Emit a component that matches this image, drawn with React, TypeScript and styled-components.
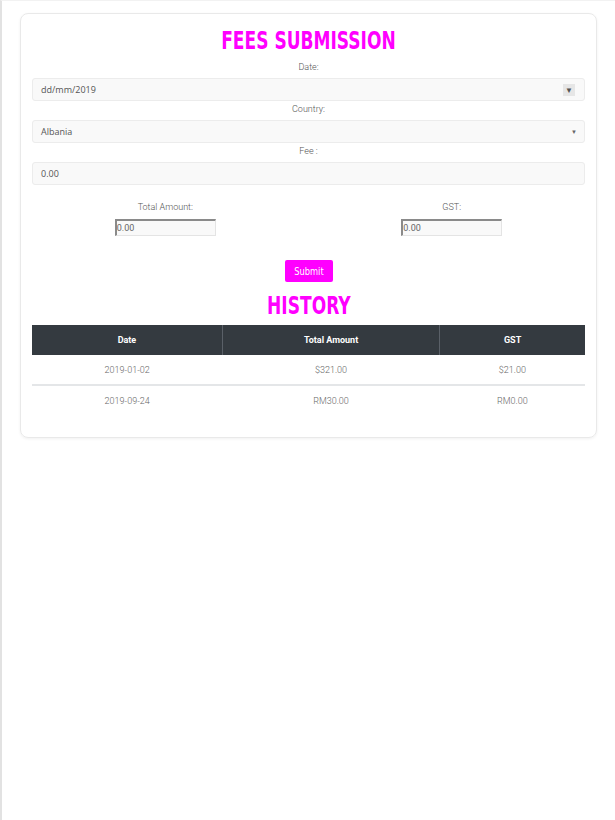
import React from "react";
import styled, { createGlobalStyle } from "styled-components";

const Global = createGlobalStyle`
  html, body { margin: 0; padding: 0; background: #fff; }
  body { font-family: Roboto, "Liberation Sans", sans-serif; }
  * { box-sizing: border-box; }
`;

const Page = styled.div`
  min-height: 820px;
  border-left: 2px solid #e2e2e2;
  border-top: 1px solid #f2f2f2;
  padding: 12px 18px 0 18px;
`;

const Card = styled.div`
  border: 1px solid #e9e9e9;
  border-radius: 8px;
  box-shadow: 0 1px 3px rgba(0, 0, 0, 0.06);
  padding: 11px 11px 22px 11px;
  display: flex;
  flex-direction: column;
  align-items: stretch;
`;

const Heading = styled.h1`
  margin: 0;
  text-align: center;
  line-height: 26px;
  height: 32px;
`;

const HeadingText = styled.span`
  display: inline-block;
  color: #ff00ff;
  font-family: "DejaVu Sans Condensed", "DejaVu Sans", sans-serif;
  font-weight: bold;
  font-size: 24px;
  transform: scaleX(0.79);
  transform-origin: center;
`;

const Label = styled.div<{ $top?: number }>`
  text-align: center;
  font-size: 9px;
  font-weight: 300;
  color: #555;
  line-height: 12px;
  margin-top: ${(p) => p.$top ?? 0}px;
  margin-bottom: 5px;
`;

const Field = styled.div`
  height: 23px;
  background: #f9f9f9;
  border: 1px solid #ececec;
  border-radius: 3px;
  display: flex;
  align-items: center;
  justify-content: space-between;
  padding: 0 7px 0 8px;
  font-size: 9px;
  color: #555;
  font-family: "Open Sans", Roboto, sans-serif;
`;

const DateArrow = styled.span`
  width: 12px;
  height: 12px;
  background: #e6e6e6;
  color: #555;
  font-size: 8px;
  display: flex;
  align-items: center;
  justify-content: center;
  margin-right: 2px;
`;

const SelectArrow = styled.span`
  font-size: 6px;
  color: #666;
`;

const Gap = styled.div<{ $h: number }>`
  height: ${(p) => p.$h}px;
`;

const SplitRow = styled.div`
  display: grid;
  grid-template-columns: 1fr 1fr;
  margin: 16px -10px 0 -10px;
`;

const SplitCol = styled.div`
  display: flex;
  flex-direction: column;
  align-items: center;
`;

const SmallLabel = styled.div`
  font-size: 9px;
  font-weight: 300;
  color: #555;
  line-height: 12px;
  margin-bottom: 6px;
`;

const SmallInput = styled.div`
  width: 101px;
  height: 17px;
  background: #f9f9f9;
  border-top: 2px solid #8a8a8a;
  border-left: 2px solid #8a8a8a;
  border-right: 1px solid #e4e4e4;
  border-bottom: 1px solid #e4e4e4;
  font-size: 9px;
  color: #666;
  line-height: 14px;
  font-family: Roboto, sans-serif;
`;

const SubmitButton = styled.button`
  align-self: center;
  margin-top: 24px;
  width: 48px;
  height: 22px;
  background: #ff00ff;
  color: #fff;
  border: none;
  border-radius: 2px;
  font-family: "DejaVu Sans Condensed", "DejaVu Sans", sans-serif;
  font-size: 10px;
  padding: 0;
`;

const ButtonText = styled.span`
  display: inline-block;
  transform: scaleX(0.92);
`;

const Table = styled.table`
  width: 100%;
  border-collapse: collapse;
  margin-top: 3px;
  font-size: 9px;
`;

const HeadCell = styled.th<{ $w: number }>`
  width: ${(p) => p.$w}px;
  height: 30px;
  background: #343a40;
  color: #fff;
  font-weight: bold;
  font-size: 9px;
  font-family: Roboto, sans-serif;
  border-left: 1px solid #5a6068;
  &:first-child { border-left: none; }
  text-align: center;
  padding: 0;
`;

const BodyRow = styled.tr`
  & + & td { border-top: 2px solid #e4e6e8; }
`;

const Cell = styled.td`
  height: 30px;
  text-align: center;
  color: #666;
  font-weight: 300;
  padding: 0;
`;

const rows = [
  { date: "2019-01-02", total: "$321.00", gst: "$21.00" },
  { date: "2019-09-24", total: "RM30.00", gst: "RM0.00" },
];

export default function App() {
  return (
    <>
      <Global />
      <Page>
        <Card>
          <Heading>
            <HeadingText>FEES SUBMISSION</HeadingText>
          </Heading>
          <Label $top={4}>Date:</Label>
          <Field>
            <span>dd/mm/2019</span>
            <DateArrow>▼</DateArrow>
          </Field>
          <Label $top={2}>Country:</Label>
          <Field>
            <span>Albania</span>
            <SelectArrow>▼</SelectArrow>
          </Field>
          <Label $top={2}>Fee :</Label>
          <Field>
            <span>0.00</span>
          </Field>
          <SplitRow>
            <SplitCol>
              <SmallLabel>Total Amount:</SmallLabel>
              <SmallInput>0.00</SmallInput>
            </SplitCol>
            <SplitCol>
              <SmallLabel>GST:</SmallLabel>
              <SmallInput>0.00</SmallInput>
            </SplitCol>
          </SplitRow>
          <SubmitButton>
            <ButtonText>Submit</ButtonText>
          </SubmitButton>
          <Gap $h={8} />
          <Heading>
            <HeadingText>HISTORY</HeadingText>
          </Heading>
          <Table>
            <thead>
              <tr>
                <HeadCell $w={190}>Date</HeadCell>
                <HeadCell $w={217}>Total Amount</HeadCell>
                <HeadCell $w={145}>GST</HeadCell>
              </tr>
            </thead>
            <tbody>
              {rows.map((r) => (
                <BodyRow key={r.date}>
                  <Cell>{r.date}</Cell>
                  <Cell>{r.total}</Cell>
                  <Cell>{r.gst}</Cell>
                </BodyRow>
              ))}
            </tbody>
          </Table>
        </Card>
      </Page>
    </>
  );
}
